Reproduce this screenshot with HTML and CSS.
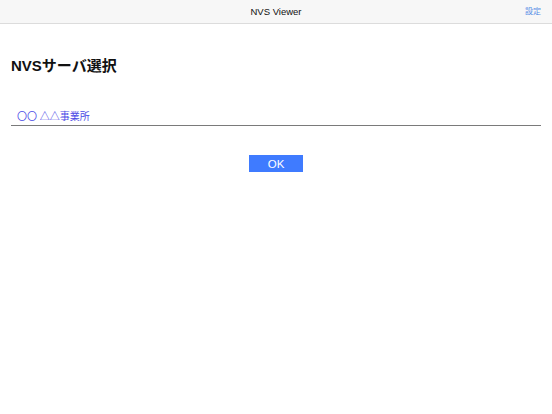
FILE: index.html
```html
<!DOCTYPE html>
<html lang="ja">
<head>
<meta charset="utf-8">
<title>NVS Viewer</title>
<link rel="stylesheet" href="styles.css">
</head>
<body>
<header class="navbar">
  <span class="nav-title">NVS Viewer</span>
  <a class="nav-action">設定</a>
</header>
<main class="content">
  <h1 class="heading">NVSサーバ選択</h1>
  <div class="field">
    <span class="field-value">〇〇 △△事業所</span>
  </div>
  <div class="actions">
    <button class="ok-button">OK</button>
  </div>
</main>
</body>
</html>
```
FILE: styles.css
```css
html, body {
  margin: 0;
  padding: 0;
  background: #ffffff;
  font-family: "Liberation Sans", "Noto Sans CJK JP", sans-serif;
}
.navbar {
  height: 23px;
  background: #f7f7f7;
  border-bottom: 1px solid #dcdcdc;
  display: flex;
  align-items: center;
  justify-content: center;
  position: relative;
}
.nav-title {
  font-size: 9.5px;
  color: #111;
}
.nav-action {
  position: absolute;
  right: 11px;
  top: 6px;
  font-size: 8px;
  line-height: 11px;
  color: #5b8fe6;
}
.content {
  padding: 0 11px;
}
.heading {
  margin: 33px 0 0 0;
  font-size: 15px;
  font-weight: bold;
  color: #111;
  line-height: 17px;
}
.field {
  margin-top: 36px;
  border-bottom: 1px solid #7a7a7a;
  padding: 0 6px;
  height: 15px;
  font-size: 10px;
  line-height: 14px;
}
.field-value {
  color: #4a4ae6;
}
.actions {
  display: flex;
  justify-content: center;
  margin-top: 29px;
}
.ok-button {
  width: 54px;
  height: 17px;
  border: none;
  padding: 0;
  background: #3f7bff;
  color: #ffffff;
  font-family: "Liberation Sans", sans-serif;
  font-size: 11.5px;
}
```
